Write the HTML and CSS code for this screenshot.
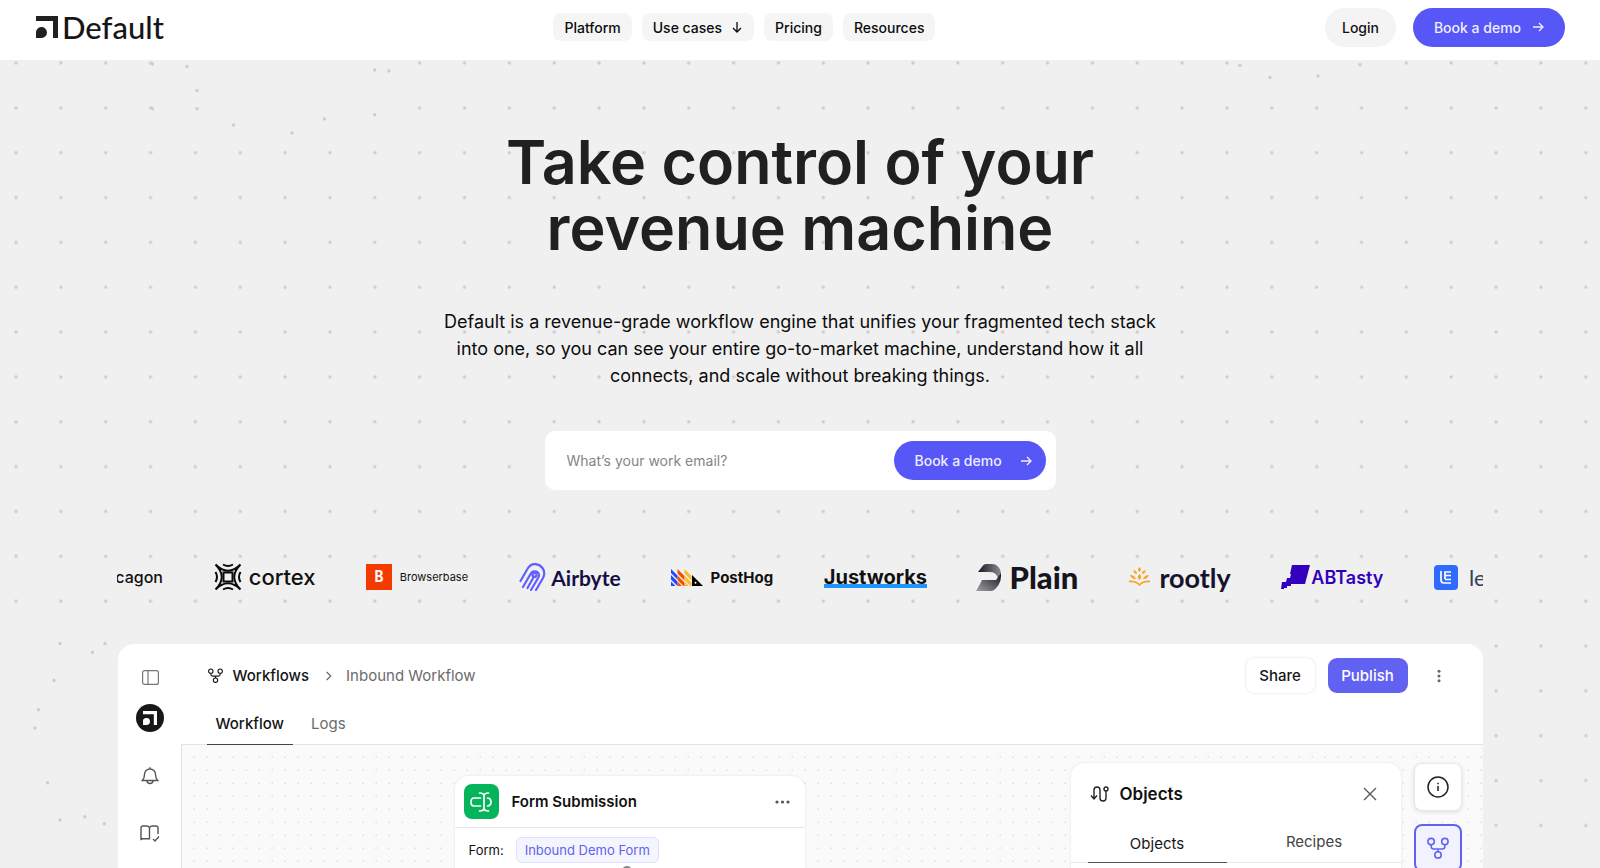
FILE: index.html
```
<!DOCTYPE html>
<html lang="en">
<head>
<meta charset="utf-8">
<title>Default</title>
<link rel="stylesheet" href="styles.css">
</head>
<body>
<svg class="defs" aria-hidden="true">
  <symbol id="arrow" viewBox="0 0 12 12"><path d="M1 6h10M7 2l4 4-4 4" fill="none" stroke="currentColor" stroke-width="1.3"/></symbol>
  <symbol id="mark" viewBox="0 0 22 22"><path d="M0 0H22V22H17V5H0Z"/><path d="M0 22V17A5.500 5.500 0 1 1 5.500 22Z"/></symbol>
  <symbol id="fork" viewBox="0 0 24 24"><g fill="none" stroke="currentColor" stroke-width="1.7"><circle cx="4.500" cy="5" r="3.500"/><circle cx="19.500" cy="5" r="3.500"/><circle cx="12" cy="19.500" r="3.500"/><path d="M4.500 8.500v1.500a3 3 0 0 0 3 3h9a3 3 0 0 0 3-3V8.500M12 13v3"/></g></symbol>
</svg>
<header class="topbar">
  <a class="brand" href="#"><svg class="brand-mark"><use href="#mark"/></svg><span>Default</span></a>
  <nav class="menu">
    <a href="#">Platform</a>
    <a href="#">Use cases <svg class="arrow down"><use href="#arrow"/></svg></a>
    <a href="#">Pricing</a>
    <a href="#">Resources</a>
  </nav>
  <div class="actions">
    <a class="pill light" href="#">Login</a>
    <a class="pill primary" href="#">Book a demo <svg class="arrow"><use href="#arrow"/></svg></a>
  </div>
</header>
<main class="hero">
  <svg class="dots" aria-hidden="true">
    <defs><pattern id="grid" width="44.850" height="44.850" patternUnits="userSpaceOnUse"><circle cx="16" cy="3" r="1.700" fill="#cdcdcd"/></pattern></defs>
    <rect width="100%" height="100%" fill="url(#grid)"/>
    <g fill="#f0f0f0"><rect x="155" y="0" width="225" height="60"/><rect x="0" y="560" width="117" height="300"/><rect x="1250" y="0" width="125" height="10"/></g>
    <g fill="#cdcdcd">
      <circle cx="152.500" cy="4" r="1.700"/><circle cx="187" cy="6.500" r="1.700"/><circle cx="197" cy="30.500" r="1.700"/><circle cx="197" cy="48.700" r="1.700"/><circle cx="152.500" cy="48.700" r="1.700"/><circle cx="233.600" cy="65" r="1.700"/><circle cx="292" cy="73" r="1.700"/><circle cx="324.500" cy="59" r="1.700"/><circle cx="374.700" cy="10" r="1.700"/><circle cx="389" cy="11" r="1.700"/><circle cx="374.700" cy="54.700" r="1.700"/>
      <circle cx="1240" cy="5.500" r="1.700"/><circle cx="1270" cy="17.500" r="1.700"/><circle cx="1318" cy="16" r="1.700"/><circle cx="1360" cy="4.700" r="1.700"/>
      <circle cx="60" cy="583.500" r="1.700"/><circle cx="105" cy="583.500" r="1.700"/><circle cx="92.500" cy="592.300" r="1.700"/><circle cx="54" cy="620.500" r="1.700"/><circle cx="38.500" cy="649.700" r="1.700"/><circle cx="34.800" cy="668" r="1.700"/><circle cx="47.500" cy="722.700" r="1.700"/><circle cx="60" cy="760" r="1.700"/><circle cx="84.700" cy="756.700" r="1.700"/><circle cx="104.300" cy="763.700" r="1.700"/>
    </g>
  </svg>
  <h1>Take control of your<br>revenue machine</h1>
  <p class="lead">Default is a revenue-grade workflow engine that unifies your fragmented tech stack<br>into one, so you can see your entire go-to-market machine, understand how it all<br>connects, and scale without breaking things.</p>
  <form class="signup">
    <input type="email" placeholder="What’s your work email?" aria-label="Work email">
    <button class="pill primary" type="button">Book a demo <svg class="arrow"><use href="#arrow"/></svg></button>
  </form>
  <div class="logos">
    <div class="logo cut-left"><span class="w-cagon">cagon</span></div>
    <div class="logo">
      <svg width="28" height="28" viewBox="0 0 28 28" fill="none" stroke="#0b0b0b" stroke-width="2"><path d="M9.500 9.500h9v9h-9z"/><path d="M1.500 1.500Q14 14 26.500 1.500Q14 14 26.500 26.500Q14 14 1.500 26.500Q14 14 1.500 1.500zM9 1.500q5 3 10 0M9 26.500q5-3 10 0M1.500 9q3 5 0 10M26.500 9q-3 5 0 10"/></svg>
      <span class="w-cortex">cortex</span>
    </div>
    <div class="logo"><span class="bb-tile">B</span><span class="w-browserbase">Browserbase</span></div>
    <div class="logo">
      <svg width="27" height="28" viewBox="0 0 27 28" fill="none" stroke="#615eff" stroke-width="2.200" stroke-linecap="round"><path d="M1.500 18L9 5C13-1 20 .500 23.500 5c2.500 3.500 2 7 .500 10l-7 12"/><path d="M4 24L11.500 11c2-4 8-3.500 8.500 1 0 1.500-.500 2.500-1.500 4L12 27"/><path d="M8.500 25L15 13.500"/><circle cx="15.500" cy="12" r="2"/></svg>
      <span class="w-airbyte">Airbyte</span>
    </div>
    <div class="logo">
      <svg width="32" height="17" viewBox="0 0 32 17"><path d="M0 0l6.500 6.500v4L0 4zM0 6l6.500 6.500V17L0 10.500zM0 12.500L4.500 17H0z" fill="#1d4aff"/><path d="M6.500 0L13.500 7v4.500L6.500 4.500zM6.500 6.500l7 7V17h-1l-6-6zM6.500 12.500L11 17H6.500z" fill="#f54e00"/><path d="M13.500 0L20.500 7v4.500l-7-7zM13.500 6.500l7 7V17h-1l-6-6zM13.500 12.500L18 17h-4.500z" fill="#f9bd2b"/><path d="M21 6l11 11H21z"/><circle cx="24.500" cy="13.800" r="1" fill="#fff"/></svg>
      <span class="w-posthog">PostHog</span>
    </div>
    <div class="logo"><span class="w-justworks">Justworks</span></div>
    <div class="logo">
      <svg width="25" height="27" viewBox="0 0 25 27"><defs><linearGradient id="pl1" x1="0" x2="1"><stop offset="0" stop-color="#1b1b24"/><stop offset="1" stop-color="#8a8a92"/></linearGradient><linearGradient id="pl2" x1="1" x2="0" y2="1"><stop offset="0" stop-color="#15151c"/><stop offset="1" stop-color="#a0a0a6"/></linearGradient></defs><path d="M2 8L7 1.500Q8 0 10 0h6q7 0 9 8.500-.500 5-3 7.500-.500-8-8-8z" fill="url(#pl1)"/><path d="M6 16h14l5-7q.500 9-4 14-3 4-6 4H0l4-7z" fill="url(#pl2)"/></svg>
      <span class="w-plain">Plain</span>
    </div>
    <div class="logo">
      <svg width="21" height="20" viewBox="0 0 21 20" fill="#f7a62e"><path d="M10.500 0q3 2.500 0 5-3-2.500 0-5zM10.500 7q3.500 3 0 6-3.500-3 0-6zM4.500 3q3.500.500 3.500 4Q4.500 7 4.500 3zM16.500 3q-3.500.500-3.500 4 3.500 0 3.500-4zM1 8q4.500 0 6 4-4.500.500-6-4zM20 8q-4.500 0-6 4 4.500.500 6-4z"/><path d="M0 14.500q7-.500 10.500 3.500 3.500-4 10.500-3.500" fill="none" stroke="#f7a62e" stroke-width="1.800"/></svg>
      <span class="w-rootly">rootly</span>
    </div>
    <div class="logo">
      <svg width="29" height="24" viewBox="0 0 29 24" fill="#3300bd"><path d="M11 0h18l-5 19H10v2H6v2H3v1H0l1-7h4l1-4h3l1-4h-1z"/></svg>
      <span class="w-abtasty">ABTasty</span>
    </div>
    <div class="logo cut-right">
      <svg width="24" height="25" viewBox="0 0 24 25"><rect width="24" height="25" rx="4" fill="#2f6bff"/><path d="M7 6v9q0 3 3 3h7M17 7h-6v7M11 10.500h6M11 14.500h6" fill="none" stroke="#fff" stroke-width="1.700"/></svg>
      <span class="w-le">le</span>
    </div>
  </div>
  <section class="app">
    <aside class="rail">
      <svg width="17" height="15" viewBox="0 0 17 15" fill="none" stroke="#777" stroke-width="1.200"><rect x=".600" y=".600" width="15.800" height="13.800" rx="2"/><path d="M6 .500v14"/></svg>
      <span class="avatar"><svg width="14" height="14"><use href="#mark"/></svg></span>
      <svg class="bell" width="18" height="18" viewBox="0 0 18 18" fill="none" stroke="#555" stroke-width="1.400"><path d="M9 .300v1.700M1.300 13.500Q3.500 11 3.500 7.500a5.500 5.500 0 0 1 11 0q0 3.500 2.200 6zM6 13.500a3 3 0 0 0 6 0"/></svg>
      <svg class="book" width="20" height="17" viewBox="0 0 20 17" fill="none" stroke="#555" stroke-width="1.400"><path d="M9.500 13.500V3Q9 1 7 1H3Q1 1 1 3v11.500l1.500-.700H9.500V3q.500-2 2.500-2h4q2 0 2 2v6M13 14l2 2 4-4.500"/></svg>
    </aside>
    <div class="work">
      <div class="crumbs">
        <svg width="15" height="15"><use href="#fork"/></svg>
        <a href="#">Workflows</a>
        <svg width="6" height="10" viewBox="0 0 6 10" fill="none" stroke="#666" stroke-width="1.200"><path d="M.700 1l4 4-4 4"/></svg>
        <span class="muted">Inbound Workflow</span>
        <div class="tools">
          <button class="share" type="button">Share</button>
          <button class="publish" type="button">Publish</button>
          <button class="more" type="button" aria-label="More"><svg width="4" height="14" viewBox="0 0 4 14" fill="#666"><circle cx="2" cy="2.200" r="1.500"/><circle cx="2" cy="7" r="1.500"/><circle cx="2" cy="11.800" r="1.500"/></svg></button>
        </div>
      </div>
      <div class="tabs"><button class="on" type="button">Workflow</button><button type="button">Logs</button></div>
      <div class="canvas">
        <article class="node">
          <div class="node-head">
            <span class="node-icon"><svg width="22" height="20" viewBox="0 0 22 20" fill="none" stroke="#fff" stroke-width="1.700" stroke-linecap="round"><path d="M10.500 6H4Q1 6 1 10t3 4h6.500M17.500 6h.500q3 .500 3 4t-3 4h-.500M9.500 1q4.500 0 4.500 3v12q0 3-4.500 3M18.500 1Q14 1 14 4v12q0 3 4.500 3"/></svg></span>
            <h2>Form Submission</h2>
            <svg class="node-more" width="15" height="4" viewBox="0 0 15 4" fill="#555"><circle cx="2" cy="2" r="1.600"/><circle cx="7.500" cy="2" r="1.600"/><circle cx="13" cy="2" r="1.600"/></svg>
          </div>
          <div class="node-body"><span>Form:</span><span class="chip">Inbound Demo Form</span><i class="port"></i></div>
        </article>
        <aside class="panel">
          <div class="panel-head">
            <svg width="19" height="16" viewBox="0 0 19 16" fill="none" stroke="#222" stroke-width="1.400"><path d="M1 9.500l3 3.500 3-3.500M4 13V4q0-3 3-3t3 3v8q0 3 3 3t3-3V5"/><circle cx="16" cy="3" r="2"/></svg>
            <h2>Objects</h2>
            <button type="button" aria-label="Close"><svg width="14" height="14" viewBox="0 0 14 14" stroke="#555" stroke-width="1.300"><path d="M1 1l12 12M13 1L1 13"/></svg></button>
          </div>
          <div class="panel-tabs"><button class="on" type="button">Objects</button><button type="button">Recipes</button></div>
        </aside>
        <div class="side-tools">
          <button type="button" aria-label="Info"><svg width="22" height="22" viewBox="0 0 22 22" fill="none" stroke="#222" stroke-width="1.500"><circle cx="11" cy="11" r="10"/><path d="M11 10v5M11 6.800v1.500"/></svg></button>
          <button class="on" type="button" aria-label="Objects"><svg width="22" height="22"><use href="#fork"/></svg></button>
        </div>
      </div>
    </div>
  </section>
</main>
</body>
</html>
```
FILE: styles.css
```
* { box-sizing: border-box; }
body { margin: 0; height: 100vh; display: flex; flex-direction: column; overflow: hidden; background: #f0f0f0; color: #111; font-family: Inter, "Liberation Sans", sans-serif; font-size: 15px; }
a { color: inherit; text-decoration: none; }
button { font: inherit; color: inherit; border: 0; background: none; padding: 0; }
h1, h2, p { margin: 0; }
svg { flex: none; display: block; }
.defs { position: absolute; width: 0; height: 0; }

.topbar { flex: none; height: 60px; padding: 0 35px 6px 36px; display: flex; align-items: center; justify-content: space-between; background: #fff; }
.brand { display: flex; align-items: center; gap: 4px; font-family: Lato, sans-serif; font-size: 31px; line-height: 36px; font-weight: 500; color: #161616; }
.brand-mark { width: 22px; height: 22px; fill: #202020; }
.menu { display: flex; gap: 10px; }
.menu a { display: flex; align-items: center; gap: 9px; height: 28px; padding: 0 11px; border-radius: 8px; background: #f5f5f5; font-size: 14px; font-weight: 500; color: #0c0c0c; }
.arrow { width: 12px; height: 12px; }
.arrow.down { transform: rotate(90deg); }
.actions { display: flex; gap: 17px; }
.pill { display: flex; align-items: center; justify-content: center; height: 39px; border-radius: 20px; font-size: 14px; font-weight: 500; }
.pill.light { width: 71px; background: #f4f4f4; }
.pill.primary { width: 152px; gap: 11px; background: #5757f8; color: #eeeeff; }

.hero { position: relative; flex: 1; min-height: 0; padding-top: 69px; display: flex; flex-direction: column; align-items: center; }
.dots { position: absolute; inset: 0; width: 100%; height: 100%; z-index: -1; }
h1 { font-size: 61px; line-height: 66px; font-weight: 600; text-align: center; color: #202020; }
.lead { margin-top: 47px; font-size: 18px; line-height: 27px; text-align: center; color: #0c0c0c; }
.signup { flex: none; display: flex; align-items: center; width: 511px; height: 59px; margin-top: 42px; padding: 0 10px 0 22px; border-radius: 10px; background: #fff; }
.signup input { flex: 1; min-width: 0; border: 0; outline: 0; padding: 0; font: inherit; font-size: 14px; background: none; }
.signup input::placeholder { color: #858585; opacity: 1; }
.signup .pill { justify-content: space-between; padding: 0 14px 0 21px; }

.logos { flex: none; width: calc(100% - 234px); height: 40px; margin-top: 67px; display: flex; justify-content: space-between; overflow: hidden; }
.logo { width: 102px; display: flex; align-items: center; justify-content: space-between; white-space: nowrap; }
.cut-left { width: 46px; justify-content: flex-end; overflow: hidden; }
.cut-right { width: 49px; justify-content: flex-start; gap: 11px; overflow: hidden; }
.w-cagon { font-size: 16px; font-weight: 500; }
.w-cortex { font-size: 22px; font-weight: 500; }
.bb-tile { width: 26px; height: 26px; background: #f53a00; color: #fff; font: bold 15px/26px "DejaVu Sans Mono", monospace; text-align: center; }
.w-browserbase { font-size: 11px; }
.w-airbyte { font: bold 21px Lato, sans-serif; color: #140f45; }
.w-posthog { font-size: 15px; font-weight: 700; }
.w-justworks { font-size: 20px; line-height: 22px; font-weight: 700; background: linear-gradient(#1c95ff, #1c95ff) bottom / 100% 4px no-repeat; }
.w-plain { font: 900 31px Lato, sans-serif; color: #15151c; }
.w-rootly { font: bold 27px Lato, sans-serif; color: #18132b; }
.w-abtasty { font-size: 18px; font-weight: 600; color: #3300bd; }
.w-le { font: 22px Lato, sans-serif; color: #34405a; }

.app { flex: 1; min-height: 0; width: calc(100% - 235px); margin-top: 47px; display: flex; overflow: hidden; border-radius: 16px 16px 0 0; background: #fff; }
.rail { flex: none; width: 63px; padding: 26px 0 0 2px; display: flex; flex-direction: column; align-items: center; }
.avatar { display: flex; align-items: center; justify-content: center; width: 28px; height: 28px; margin-top: 19px; border-radius: 50%; background: #181818; fill: #fff; }
.bell { margin-top: 35px; }
.book { margin-top: 40px; }
.work { flex: 1; min-width: 0; display: flex; flex-direction: column; }
.crumbs { flex: none; height: 63px; padding: 0 42px 0 27px; display: flex; align-items: center; color: #161616; font-weight: 500; }
.crumbs a { margin: 0 17px 0 10px; }
.muted { margin-left: 14px; color: #6b6b6b; font-weight: 400; }
.tools { margin-left: auto; display: flex; align-items: center; }
.share { width: 69px; height: 35px; border-radius: 9px; box-shadow: 0 0 2px 1px #eeeeee; }
.publish { width: 80px; height: 35px; margin-left: 13px; border-radius: 9px; background: #6262f2; color: #fff; }
.more { margin-left: 29px; }
.tabs { flex: none; height: 38px; padding-left: 26px; display: flex; border-bottom: 1px solid #e4e4e4; margin-bottom: -1px; z-index: 1; }
.tabs button { height: 38px; padding: 0 9px 6px; color: #6b6b6b; }
.tabs .on { margin-right: 9px; border-bottom: 1px solid #444; padding-bottom: 5px; color: #161616; font-weight: 500; }
.canvas { flex: 1; min-height: 0; padding-right: 21px; display: flex; align-items: flex-start; border-left: 1px solid #e4e4e4; background: #fafafa radial-gradient(circle, #e6e6e6 1px, transparent 1px) 6px 7px / 13px 13px; overflow: hidden; }
.node { flex: none; width: 350px; margin: 32px auto 0 273px; border-radius: 14px; background: #fff; box-shadow: 0 0 2px 1px #efefef; }
.node-head { height: 52px; padding: 0 15px 0 9px; display: flex; align-items: center; border-bottom: 1px solid #e6e6e6; }
.node-icon { width: 35px; height: 35px; margin-right: 13px; border-radius: 8px; background: #06b45b; display: flex; align-items: center; justify-content: center; }
.node h2 { font-size: 15px; font-weight: 600; }
.node-more { margin-left: auto; }
.node-body { position: relative; height: 60px; padding: 9px 14px; display: flex; align-items: flex-start; gap: 12px; font-size: 13px; line-height: 26px; }
.chip { padding: 0 8px; line-height: 24px; border: 1px solid #e0e0fb; border-radius: 6px; background: #f5f5ff; color: #6262e8; }
.port { position: absolute; left: 50%; top: 38px; width: 10px; height: 10px; margin-left: -8px; border-radius: 50%; background: #888; }
.panel { flex: none; width: 330px; height: 200px; margin-top: 19px; border-radius: 14px; background: #fff; box-shadow: 0 0 2px 1px #efefef; }
.panel-head { height: 61px; padding: 0 24px 0 19px; display: flex; align-items: center; gap: 11px; }
.panel h2 { font-size: 17px; font-weight: 600; }
.panel-head button { margin-left: auto; }
.panel-tabs { height: 39px; padding: 0 17px; display: flex; border-bottom: 1px solid #e8e8e8; }
.panel-tabs button { width: 139px; padding-bottom: 4px; color: #444; }
.panel-tabs button + button { margin-left: auto; }
.panel-tabs .on { height: 39px; border-bottom: 1px solid #555; padding-bottom: 0; color: #161616; }
.side-tools { flex: none; margin: 19px 0 0 13px; display: flex; flex-direction: column; gap: 13px; }
.side-tools button { width: 48px; height: 48px; border-radius: 8px; background: #fff; border: 1px solid #e8e8e8; box-shadow: 0 1px 4px #dddddd; display: flex; align-items: center; justify-content: center; }
.side-tools .on { border: 2px solid #6262f2; background: #f2f2ff; color: #6262f2; box-shadow: none; }
```
